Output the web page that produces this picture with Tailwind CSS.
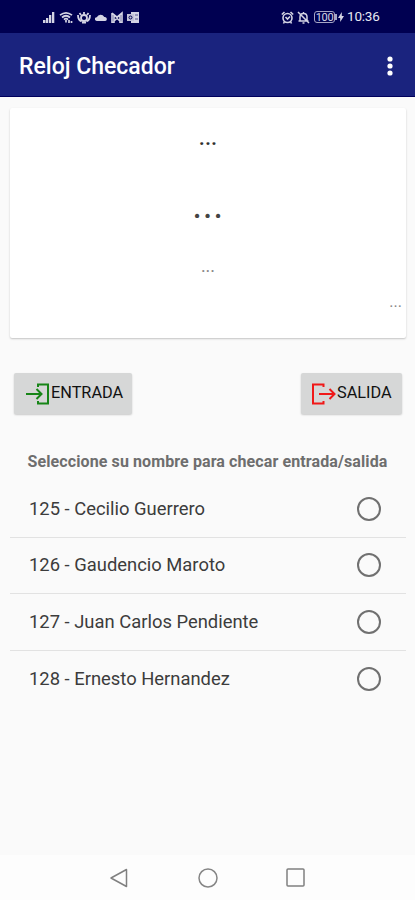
<!DOCTYPE html>
<html lang="es">
<head>
    <meta charset="UTF-8">
    <meta name="viewport" content="width=device-width, initial-scale=1.0">
    <title>Reloj Checador</title>
    <script src="https://cdn.jsdelivr.net/npm/@tailwindcss/browser@4"></script>
</head>
<body class="w-[415px] h-[900px] overflow-hidden flex flex-col bg-[#fafafa] font-['Roboto',sans-serif] text-[#303030]">
    <!-- Status bar -->
    <div class="h-[33px] shrink-0 bg-[#000051] flex items-center justify-between pl-[42px] pr-[35px] pt-px text-[#d4d4e4]">
        <div class="flex items-center gap-[4px]">
            <svg class="w-[13px] h-[13px]" viewBox="0 0 13 13" fill="currentColor"><path d="M1 9h2.500v3H1zM4 7h2.300v5H4zM7 4h2.300v8H7zM10 1h2.300v11H10z"/></svg>
            <svg class="w-[14px] h-[13px]" viewBox="0 0 14 13" fill="none" stroke="currentColor" stroke-width="1.700"><path d="M1 4.200Q7-.6 13 4.200M3 6.500Q7 3 11 6.500M5 8.700q2-2 4 0"/><path d="M7 9v2.500M10 9v3M12.500 10v2"/></svg>
            <svg class="w-[14px] h-[13px]" viewBox="0 0 14 13" fill="none" stroke="currentColor" stroke-width="1.800"><circle cx="7" cy="7" r="3"/><path d="M1 4q0 5 3.500 6.500M13 4q0 5-3.500 6.500M4 4 2.500 2M10 4l1.500-2M7 3.500V1M5 11.500h4"/></svg>
            <svg class="w-[12px] h-[13px]" viewBox="0 0 12 13" fill="currentColor"><path d="M1.800 10a1.900 1.900 0 0 1 0-3.800 4.200 4.200 0 0 1 7.500-.2A2 2 0 0 1 10.200 10z"/></svg>
            <svg class="w-[12px] h-[13px]" viewBox="0 0 12 13" fill="none" stroke="currentColor" stroke-width="1.600"><path d="M1 2v9.200h2V4l3 2.500L9 4v7.200h2V2L6 6 1 2M3 10l3-2.500L9 10"/></svg>
            <svg class="w-[13px] h-[13px]" viewBox="0 0 13 13"><path d="M4 1h8v11H4z" fill="currentColor"/><path d="M0 3h7v7H0z" fill="#c3c3d7"/><circle cx="3.500" cy="6.500" r="1.500" fill="none" stroke="#000051"/><path d="M8 4h3M8 8h3" stroke="#55558c"/></svg>
        </div>
        <div class="flex items-center">
            <svg class="w-[13px] h-[13px] mr-[3px]" viewBox="0 0 13 13" fill="none" stroke="currentColor" stroke-width="1.600"><circle cx="6.500" cy="7" r="4.500"/><path d="M.8 3.500 3.500 1M12.200 3.500 9.500 1M4.500 6l2 2 2.500-2.500M3.500 10.500 2.500 12.500M9.500 10.500l1 2"/></svg>
            <svg class="w-[13px] h-[13px] mr-[4px]" viewBox="0 0 13 13" fill="none" stroke="currentColor" stroke-width="1.500"><path d="M3 10V6q0-3.500 3.500-3.500T10 6v4M1.500 10h10M6.500 1v1.500M5.500 12h2M1 1l11 11"/></svg>
            <div class="w-[21px] h-[12px] rounded-[3px] border border-[#a5a5c5] flex items-center justify-center text-[11px] leading-none tracking-[-0.3px]">100</div>
            <div class="w-[2px] h-[6px] bg-[#a5a5c5]"></div>
            <svg class="w-[6px] h-[10px] ml-px" viewBox="0 0 6 10" fill="currentColor"><path d="M3.800 0v4H6L2.200 10V6H0z"/></svg>
            <span class="ml-[3px] w-[33px] text-[13.500px] leading-none tracking-[-0.200px] text-[#e8e8f2] whitespace-nowrap">10:36</span>
        </div>
    </div>

    <!-- App bar -->
    <header class="h-[64px] shrink-0 bg-[#1a237e] border-b border-[#00005c] flex items-center justify-between pl-[19px] pr-[22px] pt-[3px]">
        <h1 class="text-[23px] leading-none font-medium text-white whitespace-nowrap">Reloj Checador</h1>
        <svg class="w-[6px] h-[20px] mb-px" viewBox="0 0 6 20" fill="#fff"><circle cx="3" cy="3" r="2.600"/><circle cx="3" cy="10" r="2.600"/><circle cx="3" cy="17" r="2.600"/></svg>
    </header>

    <!-- Clock card -->
    <section class="mt-[11px] ml-[10px] w-[396px] h-[230px] shrink-0 bg-white rounded-[2px] shadow-[0_1px_2px_rgba(0,0,0,0.22)] flex flex-col items-center">
        <div class="mt-[18px] h-[24px] text-[22px] leading-[24px] font-medium">...</div>
        <div class="mt-[35px] h-[40px] text-[38px] leading-[40px] tracking-[0.500px] text-[#444]">...</div>
        <div class="mt-[32px] h-[18px] text-[18px] leading-[18px] text-[#888]">...</div>
        <div class="mt-[18px] h-[17px] self-end mr-[4px] text-[16px] leading-[17px] text-[#888]">...</div>
    </section>

    <!-- Check in / check out -->
    <div class="mt-[35px] ml-[14px] w-[388px] h-[41px] shrink-0 flex justify-between text-[16.300px] leading-none text-[#111]">
        <button class="w-[118px] h-[41px] bg-[#d6d7d7] rounded-[2px] shadow-[0_1px_2px_rgba(0,0,0,0.2)] flex items-center pl-[12px]">
            <svg class="w-[24px] h-[22px] mr-px shrink-0" viewBox="0 0 24 22" fill="none" stroke="#178517" stroke-width="2"><path d="M0 11h15M10.500 6l5 5-5 5M12 4V1.500h10v19H12V18"/></svg>
            <span>ENTRADA</span>
        </button>
        <button class="w-[101px] h-[41px] bg-[#d6d7d7] rounded-[2px] shadow-[0_1px_2px_rgba(0,0,0,0.2)] flex items-center pl-[11px]">
            <svg class="w-[24px] h-[22px] mr-px shrink-0" viewBox="0 0 24 22" fill="none" stroke="#f01818" stroke-width="2"><path d="M11.500 4V1.500H1v19h10.500V18M7 11h16M17.500 6l5 5-5 5"/></svg>
            <span>SALIDA</span>
        </button>
    </div>

    <!-- Employee list -->
    <h2 class="mt-[38px] h-[20px] shrink-0 text-center text-[16px] leading-[20px] font-bold text-[#6e6e6e] tracking-[0.100px] whitespace-nowrap">Seleccione su nombre para checar entrada/salida</h2>
    <ul class="mt-[9px] ml-[10px] w-[396px] text-[18.400px] leading-none text-[#3c3c3c]">
        <li class="h-[56.500px] flex items-center justify-between pl-[19px] pr-[25px] border-b border-[#e2e2e2]"><span>125 - Cecilio Guerrero</span><span class="size-[24px] rounded-full border-2 border-[#707070]"></span></li>
        <li class="h-[56.500px] flex items-center justify-between pl-[19px] pr-[25px] border-b border-[#e2e2e2]"><span>126 - Gaudencio Maroto</span><span class="size-[24px] rounded-full border-2 border-[#707070]"></span></li>
        <li class="h-[56.500px] flex items-center justify-between pl-[19px] pr-[25px] border-b border-[#e2e2e2]"><span>127 - Juan Carlos Pendiente</span><span class="size-[24px] rounded-full border-2 border-[#707070]"></span></li>
        <li class="h-[56.500px] flex items-center justify-between pl-[19px] pr-[25px]"><span>128 - Ernesto Hernandez</span><span class="size-[24px] rounded-full border-2 border-[#707070]"></span></li>
    </ul>

    <!-- System navigation -->
    <nav class="mt-auto h-[45px] shrink-0 bg-[#fdfdfd] flex items-center justify-between pl-[110px] pr-[110px]">
        <svg class="w-[18px] h-[20px]" viewBox="0 0 18 20" fill="none" stroke="#808080" stroke-width="1.500" stroke-linejoin="round"><path d="M1 10 16.500 1.500v17z"/></svg>
        <svg class="size-[20px] ml-px" viewBox="0 0 20 20" fill="none" stroke="#858585" stroke-width="1.500"><circle cx="10" cy="10" r="9"/></svg>
        <svg class="size-[19px]" viewBox="0 0 19 19" fill="none" stroke="#808080" stroke-width="1.500"><rect x="1" y="1" width="17" height="17" rx="1"/></svg>
    </nav>
</body>
</html>
